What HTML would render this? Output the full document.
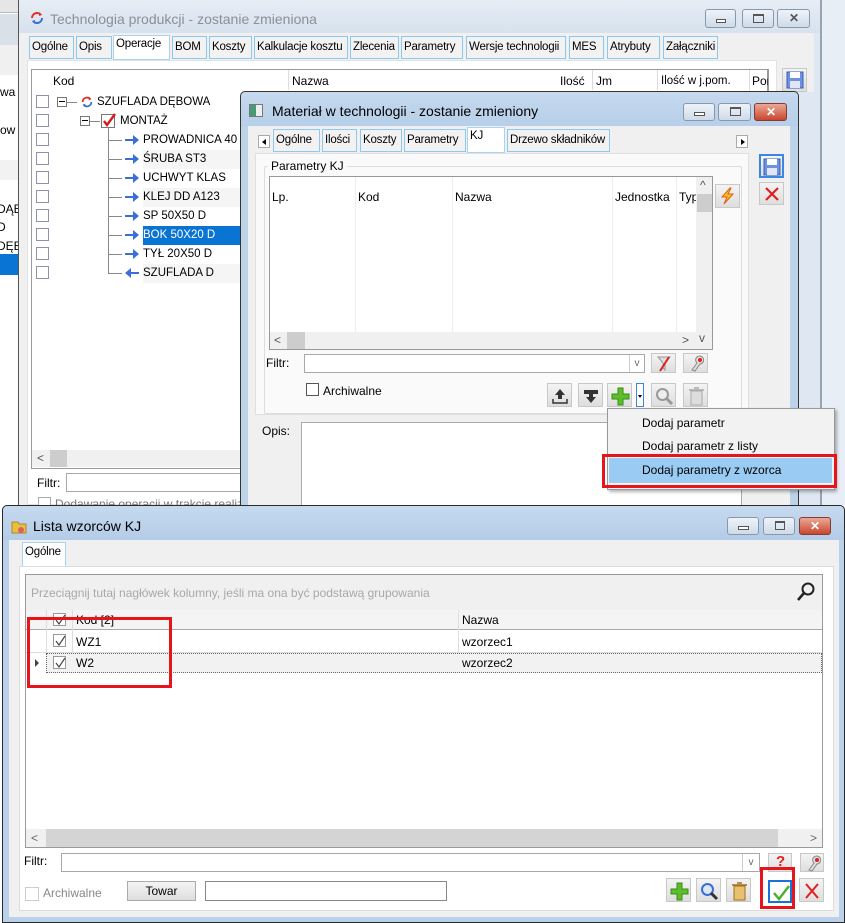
<!DOCTYPE html>
<html><head><meta charset="utf-8">
<style>
*{box-sizing:border-box;margin:0;padding:0}
body{width:845px;height:923px;position:relative;overflow:hidden;background:#fff;font-family:"Liberation Sans",sans-serif;font-size:12px;color:#000}
.a{position:absolute}
.t{position:absolute;white-space:nowrap;line-height:14px}
.tab{position:absolute;border:1px solid #8cc8f0;background:#f2f2f2;padding:4px 2px 0 2px;font-size:11.5px;letter-spacing:-0.2px;white-space:nowrap;overflow:hidden}
.tab.on{background:#fff;border-color:#a9d3f2;padding-top:2px}
.wb{position:absolute;border:1px solid #8898ab;border-radius:3px;background:linear-gradient(#eef3f9,#cfdbe9);}
.wb.cl{background:linear-gradient(#eba898,#c8462e);border-color:#8a3a2c}
.btn{position:absolute;border:1px solid #c8c8c8;background:linear-gradient(#f4f4f4,#dedede)}
.cb{position:absolute;width:13px;height:13px;border:1px solid #8f8fb0;background:#fff}
.inp{position:absolute;border:1px solid #a8a8a8;background:#fff}
</style></head><body>

<div class="a" style="left:0;top:0;width:18px;height:13px;background:#e6e6e6;border-bottom:1px solid #b8b8b8"></div>
<div class="a" style="left:0;top:14px;width:18px;height:31px;background:#d9e0e8"></div>
<div class="a" style="left:0;top:45px;width:18px;height:30px;background:#f0f0f0"></div>
<div class="a" style="left:0;top:160px;width:18px;height:20px;background:#f2f2f2"></div>
<div class="t" style="left:0;top:85px">wa</div>
<div class="t" style="left:0;top:123px">ow</div>
<div class="t" style="left:-3px;top:202px">DĄB</div>
<div class="t" style="left:-3px;top:220px">D</div>
<div class="t" style="left:-3px;top:239px">DĘB</div>
<div class="a" style="left:0;top:254px;width:18px;height:21px;background:#0a74d4"></div>
<div class="a" style="left:0;top:275px;width:18px;height:230px;background:#fff"></div>

<div class="a" style="left:820px;top:0;width:25px;height:505px;background:#e8eef5;border-left:2px solid #9aa4b0"></div>

<!-- WINDOW 1 -->
<div class="a" style="left:18px;top:0;width:802px;height:505px;background:#dfe8f2;border-left:1px solid #555"></div>
<div class="a" style="left:19px;top:0;width:801px;height:33px;background:linear-gradient(#e6edf5,#d7e2ee)"></div>
<svg class="a" style="left:29px;top:10px" width="16" height="16" viewBox="0 0 16 16"><path d="M3 8a5 5 0 0 1 9-3" stroke="#e03030" stroke-width="2" fill="none"/><path d="M13 8a5 5 0 0 1-9 3" stroke="#3a6ed8" stroke-width="2" fill="none"/><path d="M10 2l3 3-3 1z" fill="#e03030"/><path d="M6 14l-3-3 3-1z" fill="#3a6ed8"/></svg>
<div class="t" style="left:50px;top:12px;font-size:14px;color:#8a8f96">Technologia produkcji - zostanie zmieniona</div>
<div class="wb" style="left:705px;top:9px;width:31px;height:19px"><div class="a" style="left:10px;top:9px;width:10px;height:4px;border:1px solid #555;background:#fff"></div></div>
<div class="wb" style="left:742px;top:9px;width:32px;height:19px"><div class="a" style="left:10px;top:4px;width:11px;height:9px;border:1px solid #555;border-top-width:2px"></div></div>
<div class="wb" style="left:777px;top:9px;width:33px;height:19px"><div class="t" style="left:11px;top:1px;font-weight:bold;color:#555">✕</div></div>
<div class="a" style="left:19px;top:33px;width:795px;height:472px;background:#f0f0f0"></div>
<div class="tab" style="left:29px;top:36px;width:45px;height:23px">Ogólne</div>
<div class="tab" style="left:76px;top:36px;width:36px;height:23px">Opis</div>
<div class="tab on" style="left:113px;top:35px;width:57px;height:25px">Operacje</div>
<div class="tab" style="left:172px;top:36px;width:35px;height:23px">BOM</div>
<div class="tab" style="left:209px;top:36px;width:43px;height:23px">Koszty</div>
<div class="tab" style="left:254px;top:36px;width:94px;height:23px">Kalkulacje kosztu</div>
<div class="tab" style="left:350px;top:36px;width:49px;height:23px">Zlecenia</div>
<div class="tab" style="left:401px;top:36px;width:62px;height:23px">Parametry</div>
<div class="tab" style="left:466px;top:36px;width:100px;height:23px">Wersje technologii</div>
<div class="tab" style="left:569px;top:36px;width:35px;height:23px">MES</div>
<div class="tab" style="left:607px;top:36px;width:53px;height:23px">Atrybuty</div>
<div class="tab" style="left:663px;top:36px;width:55px;height:23px">Załączniki</div>
<div class="a" style="left:27px;top:60px;width:750px;height:445px;background:#fff;border:1px solid #e2e2e2"></div>
<div class="a" style="left:31px;top:69px;width:738px;height:400px;border:1px solid #9a9a9a;border-right-width:2px;background:#fff"></div>
<div class="t" style="left:53px;top:74px">Kod</div>
<div class="t" style="left:292px;top:74px">Nazwa</div>
<div class="a" style="left:288px;top:70px;width:1px;height:20px;background:#ddd"></div>
<div class="t" style="left:560px;top:74px">Ilość</div>
<div class="a" style="left:592px;top:70px;width:1px;height:20px;background:#ddd"></div>
<div class="t" style="left:596px;top:74px">Jm</div>
<div class="a" style="left:657px;top:70px;width:1px;height:20px;background:#ddd"></div>
<div class="t" style="left:661px;top:74px;font-size:11.5px">Ilość w j.pom.</div>
<div class="a" style="left:749px;top:70px;width:1px;height:20px;background:#ddd"></div>
<div class="t" style="left:752px;top:74px;width:16px;overflow:hidden">Por</div>
<div class="btn" style="left:782px;top:68px;width:25px;height:24px"><svg class="a" style="left:3px;top:2px" width="18" height="18"><rect x="1" y="1" width="16" height="16" fill="#6f8fe0" stroke="#3a5cb8"/><rect x="4" y="1" width="10" height="6" fill="#fff"/><rect x="4" y="10" width="10" height="7" fill="#dfe6f7"/></svg></div>
<div class="a" style="left:143px;top:150px;width:97px;height:19px;background:#f5f5f5"></div>
<div class="a" style="left:143px;top:188px;width:97px;height:19px;background:#f5f5f5"></div>
<div class="a" style="left:143px;top:264px;width:97px;height:19px;background:#f5f5f5"></div>
<div class="a" style="left:143px;top:226px;width:97px;height:19px;background:#0a74d4"></div>
<div class="cb" style="left:36px;top:95px"></div><div class="cb" style="left:36px;top:114px"></div><div class="cb" style="left:36px;top:133px"></div><div class="cb" style="left:36px;top:152px"></div><div class="cb" style="left:36px;top:171px"></div><div class="cb" style="left:36px;top:190px"></div><div class="cb" style="left:36px;top:209px"></div><div class="cb" style="left:36px;top:228px"></div><div class="cb" style="left:36px;top:247px"></div><div class="cb" style="left:36px;top:266px"></div>
<div class="a" style="left:57px;top:97px;width:10px;height:10px;border:1px solid #777;background:#fff"><div class="a" style="left:1px;top:3px;width:6px;height:1px;background:#000"></div></div>
<div class="a" style="left:67px;top:102px;width:10px;height:1px;background:#888"></div>
<svg class="a" style="left:80px;top:95px" width="14" height="14" viewBox="0 0 16 16"><path d="M3 8a5 5 0 0 1 9-3" stroke="#e03030" stroke-width="2" fill="none"/><path d="M13 8a5 5 0 0 1-9 3" stroke="#3a6ed8" stroke-width="2" fill="none"/><path d="M10 2l3 3-3 1z" fill="#e03030"/><path d="M6 14l-3-3 3-1z" fill="#3a6ed8"/></svg>
<div class="t" style="left:97px;top:95px;font-size:11.5px">SZUFLADA DĘBOWA</div>
<div class="a" style="left:80px;top:116px;width:10px;height:10px;border:1px solid #777;background:#fff"><div class="a" style="left:1px;top:3px;width:6px;height:1px;background:#000"></div></div>
<div class="a" style="left:90px;top:121px;width:10px;height:1px;background:#888"></div>
<div class="a" style="left:101px;top:114px;width:14px;height:14px;border:1px solid #777;background:#fff"></div>
<svg class="a" style="left:101px;top:112px" width="16" height="16"><path d="M3 9l3 4 8-11" stroke="#d41c1c" stroke-width="2.4" fill="none"/></svg>
<div class="t" style="left:120px;top:114px;font-size:11.5px">MONTAŻ</div>
<div class="a" style="left:108px;top:128px;width:1px;height:145px;background:#888"></div>
<div class="a" style="left:108px;top:140px;width:14px;height:1px;background:#888"></div><div class="a" style="left:108px;top:159px;width:14px;height:1px;background:#888"></div><div class="a" style="left:108px;top:178px;width:14px;height:1px;background:#888"></div><div class="a" style="left:108px;top:197px;width:14px;height:1px;background:#888"></div><div class="a" style="left:108px;top:216px;width:14px;height:1px;background:#888"></div><div class="a" style="left:108px;top:235px;width:14px;height:1px;background:#888"></div><div class="a" style="left:108px;top:254px;width:14px;height:1px;background:#888"></div><div class="a" style="left:108px;top:273px;width:14px;height:1px;background:#888"></div>
<svg class="a" style="left:125px;top:134px" width="14" height="150"><g fill="#3a6ed8"><path d="M0 5h8v-4l6 5-6 5v-4h-8z"/><path d="M0 24h8v-4l6 5-6 5v-4h-8z"/><path d="M0 43h8v-4l6 5-6 5v-4h-8z"/><path d="M0 62h8v-4l6 5-6 5v-4h-8z"/><path d="M0 81h8v-4l6 5-6 5v-4h-8z"/><path d="M0 100h8v-4l6 5-6 5v-4h-8z"/><path d="M0 119h8v-4l6 5-6 5v-4h-8z"/><path d="M14 138h-8v-4l-6 5 6 5v-4h8z"/></g></svg>
<div class="t" style="left:143px;top:133px;font-size:11.5px">PROWADNICA 40</div>
<div class="t" style="left:143px;top:152px;font-size:11.5px">ŚRUBA ST3</div>
<div class="t" style="left:143px;top:171px;font-size:11.5px">UCHWYT KLAS</div>
<div class="t" style="left:143px;top:190px;font-size:11.5px">KLEJ DD A123</div>
<div class="t" style="left:143px;top:209px;font-size:11.5px">SP 50X50 D</div>
<div class="t" style="left:143px;top:228px;color:#fff;font-size:11.5px">BOK 50X20 D</div>
<div class="t" style="left:143px;top:247px;font-size:11.5px">TYŁ 20X50 D</div>
<div class="t" style="left:143px;top:266px;font-size:11.5px">SZUFLADA D</div>
<div class="a" style="left:32px;top:450px;width:208px;height:17px;background:#f0f0f0"></div>
<div class="a" style="left:50px;top:450px;width:17px;height:17px;background:#cdcdcd"></div>
<div class="t" style="left:37px;top:451px;color:#555">&lt;</div>
<div class="t" style="left:37px;top:476px">Filtr:</div>
<div class="inp" style="left:66px;top:473px;width:180px;height:19px"></div>
<div class="cb" style="left:38px;top:497px;border-color:#aaa"></div>
<div class="t" style="left:55px;top:497px;color:#777">Dodawanie operacji w trakcie realiza</div>

<!-- WINDOW 2 -->
<div class="a" style="left:240px;top:91px;width:559px;height:420px;background:#bcd3ea;border:1px solid #333;border-radius:5px 5px 0 0"></div>
<div class="a" style="left:241px;top:92px;width:557px;height:34px;background:linear-gradient(#c5d9ee,#b7cfe9);border-radius:5px 5px 0 0"></div>
<div class="a" style="left:799px;top:92px;width:15px;height:413px;background:#dfe8f2"></div>
<div class="a" style="left:249px;top:104px;width:14px;height:13px;border:1px solid #777;background:linear-gradient(90deg,#4a9a7a 50%,#eee 50%)"></div>
<div class="t" style="left:272px;top:104px;font-size:14px">Materiał w technologii - zostanie zmieniony</div>
<div class="wb" style="left:683px;top:103px;width:32px;height:18px"><div class="a" style="left:10px;top:8px;width:11px;height:4px;border:1px solid #555;background:#fff"></div></div>
<div class="wb" style="left:718px;top:103px;width:33px;height:18px"><div class="a" style="left:11px;top:3px;width:11px;height:9px;border:1px solid #555;border-top-width:2px"></div></div>
<div class="wb cl" style="left:754px;top:103px;width:33px;height:18px"><div class="t" style="left:11px;top:1px;font-weight:bold;color:#fff">✕</div></div>
<div class="a" style="left:248px;top:126px;width:542px;height:385px;background:#f0f0f0"></div>
<div class="a" style="left:258px;top:135px;width:12px;height:13px;border:1px solid #aaa;background:#fff"><div class="a" style="left:3px;top:3px;border-right:4px solid #000;border-top:3px solid transparent;border-bottom:3px solid transparent"></div></div>
<div class="a" style="left:736px;top:135px;width:12px;height:13px;border:1px solid #aaa;background:#fff"><div class="a" style="left:4px;top:3px;border-left:4px solid #000;border-top:3px solid transparent;border-bottom:3px solid transparent"></div></div>
<div class="tab" style="left:273px;top:129px;width:47px;height:23px">Ogólne</div>
<div class="tab" style="left:322px;top:129px;width:35px;height:23px">Ilości</div>
<div class="tab" style="left:360px;top:129px;width:42px;height:23px">Koszty</div>
<div class="tab" style="left:404px;top:129px;width:62px;height:23px">Parametry</div>
<div class="tab on" style="left:467px;top:127px;width:38px;height:26px">KJ</div>
<div class="tab" style="left:507px;top:129px;width:103px;height:23px">Drzewo składników</div>
<div class="a" style="left:255px;top:153px;width:494px;height:262px;background:#fafafa;border:1px solid #e0e0e0"></div>
<div class="a" style="left:264px;top:166px;width:478px;height:248px;border:1px solid #dcdcdc;border-radius:2px"></div>
<div class="t" style="left:268px;top:159px;background:#fafafa;padding:0 3px">Parametry KJ</div>
<div class="a" style="left:269px;top:176px;width:444px;height:174px;border:1px solid #999;background:#fff"></div>
<div class="a" style="left:355px;top:177px;width:1px;height:155px;background:#eee"></div>
<div class="a" style="left:452px;top:177px;width:1px;height:155px;background:#eee"></div>
<div class="a" style="left:612px;top:177px;width:1px;height:155px;background:#eee"></div>
<div class="a" style="left:676px;top:177px;width:1px;height:155px;background:#eee"></div>
<div class="t" style="left:272px;top:190px">Lp.</div>
<div class="t" style="left:358px;top:190px">Kod</div>
<div class="t" style="left:455px;top:190px">Nazwa</div>
<div class="t" style="left:615px;top:190px">Jednostka</div>
<div class="t" style="left:679px;top:190px;width:17px;overflow:hidden">Typ</div>
<div class="a" style="left:696px;top:177px;width:16px;height:172px;background:#f0f0f0"></div>
<div class="a" style="left:697px;top:194px;width:15px;height:18px;background:#cdcdcd"></div>
<div class="t" style="left:700px;top:178px;color:#555">^</div>
<div class="t" style="left:699px;top:331px;color:#555">v</div>
<div class="a" style="left:270px;top:332px;width:426px;height:17px;background:#f0f0f0"></div>
<div class="a" style="left:287px;top:332px;width:18px;height:17px;background:#cdcdcd"></div>
<div class="t" style="left:274px;top:333px;color:#555">&lt;</div>
<div class="t" style="left:682px;top:333px;color:#555">&gt;</div>
<div class="btn" style="left:715px;top:184px;width:25px;height:24px"><svg class="a" style="left:3px;top:2px" width="18" height="18"><path d="M11 1L3 10h5l-3 7 9-10h-5l3-6z" fill="#f5c020" stroke="#e06010"/></svg></div>
<div class="btn" style="left:759px;top:154px;width:25px;height:24px;border:2px solid #3a86e0"><svg class="a" style="left:2px;top:2px" width="18" height="18"><rect x="1" y="1" width="16" height="16" fill="#6f8fe0" stroke="#3a5cb8"/><rect x="4" y="1" width="10" height="6" fill="#fff"/><rect x="4" y="10" width="10" height="7" fill="#dfe6f7"/></svg></div>
<div class="btn" style="left:759px;top:182px;width:25px;height:23px"><svg class="a" style="left:4px;top:3px" width="16" height="16"><path d="M2 2l12 12M14 2L2 14" stroke="#e02020" stroke-width="2.2"/></svg></div>
<div class="t" style="left:266px;top:356px">Filtr:</div>
<div class="inp" style="left:304px;top:354px;width:341px;height:19px"><div class="a" style="right:0;top:0;width:15px;height:17px;border-left:1px solid #ccc;text-align:center;color:#666;font-size:10px;line-height:17px">v</div></div>
<div class="btn" style="left:651px;top:353px;width:25px;height:20px"><svg class="a" style="left:4px;top:1px" width="16" height="17"><path d="M2 2h12l-5 6v7l-2-2v-5z" fill="#ddd" stroke="#999"/><path d="M13 2L4 16" stroke="#e02020" stroke-width="2"/></svg></div>
<div class="btn" style="left:683px;top:353px;width:25px;height:20px"><svg class="a" style="left:4px;top:1px" width="16" height="17"><path d="M4 15l5-7a4 4 0 1 1 3 1l-5 7z" fill="#ddd" stroke="#888"/><circle cx="12" cy="5" r="2" fill="#e02020"/></svg></div>
<div class="cb" style="left:306px;top:383px;border-color:#555"></div>
<div class="t" style="left:323px;top:384px">Archiwalne</div>
<div class="btn" style="left:547px;top:383px;width:25px;height:24px"><svg class="a" style="left:4px;top:4px" width="16" height="16"><path d="M8 1l5 6h-3v4H6V7H3z" fill="#333"/><path d="M1 11v4h14v-4" stroke="#333" fill="none" stroke-width="1.5"/></svg></div>
<div class="btn" style="left:578px;top:383px;width:25px;height:24px"><svg class="a" style="left:4px;top:4px" width="16" height="16"><path d="M1 2h14v4H1z" fill="#333"/><path d="M8 15l5-6h-3V5H6v4H3z" fill="#333"/></svg></div>
<div class="btn" style="left:607px;top:383px;width:25px;height:24px"><svg class="a" style="left:3px;top:3px" width="19" height="19"><path d="M7 1h5v6h6v5h-6v6H7v-6H1V7h6z" fill="#5cbf2a" stroke="#3a8a1a"/></svg></div>
<div class="a" style="left:636px;top:383px;width:8px;height:24px;border:1px solid #3a86e0;background:#fff"><div class="a" style="left:1px;top:11px;border-top:3px solid #000;border-left:2px solid transparent;border-right:2px solid transparent"></div></div>
<div class="btn" style="left:651px;top:383px;width:25px;height:24px"><svg class="a" style="left:3px;top:3px" width="19" height="19"><circle cx="7.5" cy="7.5" r="5.5" fill="#eee" stroke="#999" stroke-width="2"/><path d="M11 11l6 6" stroke="#999" stroke-width="3"/></svg></div>
<div class="btn" style="left:683px;top:383px;width:25px;height:24px"><svg class="a" style="left:5px;top:3px" width="16" height="19"><rect x="2" y="4" width="11" height="14" fill="#ddd" stroke="#aaa"/><path d="M0 3h15M5 1h5" stroke="#aaa" stroke-width="1.5"/></svg></div>
<div class="t" style="left:262px;top:424px">Opis:</div>
<div class="inp" style="left:301px;top:422px;width:441px;height:95px;border-color:#aaa"></div>
<div class="a" style="left:607px;top:408px;width:228px;height:82px;background:#f2f2f2;border:1px solid #999;box-shadow:2px 2px 3px rgba(0,0,0,.3)"></div>
<div class="t" style="left:642px;top:416px">Dodaj parametr</div>
<div class="t" style="left:642px;top:439px">Dodaj parametr z listy</div>
<div class="a" style="left:609px;top:458px;width:223px;height:25px;background:#99cbf3"></div>
<div class="t" style="left:642px;top:463px">Dodaj parametry z wzorca</div>
<div class="a" style="left:602px;top:454px;width:235px;height:34px;border:3px solid #e8141c"></div>

<!-- WINDOW 3 -->
<div class="a" style="left:2px;top:505px;width:843px;height:418px;background:#b9d1ea;border:1px solid #2a2a2a;border-radius:5px 5px 0 0"></div>
<div class="a" style="left:3px;top:506px;width:841px;height:34px;background:linear-gradient(#c6daef,#b3cce7);border-radius:5px 5px 0 0"></div>
<svg class="a" style="left:11px;top:518px" width="16" height="16"><path d="M1 4h6l1 2h7v9H1z" fill="#e8c040" stroke="#b08820"/><circle cx="10" cy="12" r="3" fill="#e06060"/></svg>
<div class="t" style="left:33px;top:519px;font-size:14px">Lista wzorców KJ</div>
<div class="wb" style="left:727px;top:517px;width:32px;height:18px"><div class="a" style="left:10px;top:8px;width:11px;height:4px;border:1px solid #555;background:#fff"></div></div>
<div class="wb" style="left:763px;top:517px;width:32px;height:18px"><div class="a" style="left:11px;top:3px;width:10px;height:9px;border:1px solid #555;border-top-width:2px"></div></div>
<div class="wb cl" style="left:799px;top:517px;width:32px;height:18px"><div class="t" style="left:10px;top:1px;font-weight:bold;color:#fff">✕</div></div>
<div class="a" style="left:9px;top:540px;width:830px;height:377px;background:#f0f0f0"></div>
<div class="tab on" style="left:22px;top:542px;width:44px;height:25px;padding-top:3px">Ogólne</div>
<div class="a" style="left:19px;top:566px;width:815px;height:345px;background:#fff;border:1px solid #dcdcdc"></div>
<div class="a" style="left:25px;top:574px;width:798px;height:274px;border:1px solid #999;background:#fff"></div>
<div class="a" style="left:26px;top:575px;width:796px;height:35px;background:#f0f0f0"></div>
<div class="t" style="left:31px;top:586px;color:#a8a8a8">Przeciągnij tutaj nagłówek kolumny, jeśli ma ona być podstawą grupowania</div>
<svg class="a" style="left:796px;top:582px" width="20" height="20"><circle cx="12" cy="7" r="5.5" fill="none" stroke="#222" stroke-width="2"/><path d="M8 11l-6 7" stroke="#222" stroke-width="2.5"/></svg>
<div class="a" style="left:26px;top:610px;width:796px;height:20px;background:#f4f4f4;border-bottom:1px solid #aaa"></div>
<div class="a" style="left:46px;top:610px;width:1px;height:63px;background:#ddd"></div>
<div class="a" style="left:72px;top:610px;width:1px;height:63px;background:#ddd"></div>
<div class="a" style="left:458px;top:610px;width:1px;height:63px;background:#ddd"></div>
<div class="cb" style="left:53px;top:613px;border-color:#999"></div>
<div class="t" style="left:76px;top:613px">Kod [2]</div>
<div class="t" style="left:462px;top:613px">Nazwa</div>
<div class="a" style="left:26px;top:652px;width:796px;height:1px;background:#ddd"></div>
<div class="a" style="left:46px;top:653px;width:776px;height:20px;background:#f2f2f2;border:1px dotted #666"></div>
<div class="cb" style="left:53px;top:634px;border-color:#999"></div>
<svg class="a" style="left:54px;top:635px" width="12" height="12"><path d="M2 6l3 4 6-9" stroke="#444" fill="none" stroke-width="1.2"/></svg>
<svg class="a" style="left:54px;top:614px" width="12" height="12"><path d="M2 6l3 4 6-9" stroke="#444" fill="none" stroke-width="1.2"/></svg>
<div class="cb" style="left:53px;top:656px;border-color:#999"></div>
<svg class="a" style="left:54px;top:657px" width="12" height="12"><path d="M2 6l3 4 6-9" stroke="#444" fill="none" stroke-width="1.2"/></svg>
<div class="a" style="left:35px;top:659px;border-left:4px solid #444;border-top:4px solid transparent;border-bottom:4px solid transparent"></div>
<div class="t" style="left:76px;top:635px">WZ1</div>
<div class="t" style="left:462px;top:635px">wzorzec1</div>
<div class="t" style="left:76px;top:656px">W2</div>
<div class="t" style="left:462px;top:656px">wzorzec2</div>
<div class="a" style="left:27px;top:617px;width:145px;height:71px;border:3px solid #e8141c"></div>
<div class="a" style="left:26px;top:829px;width:796px;height:18px;background:#f0f0f0"></div>
<div class="a" style="left:46px;top:829px;width:732px;height:18px;background:#d4d4d4"></div>
<div class="t" style="left:31px;top:831px;color:#666">&lt;</div>
<div class="t" style="left:810px;top:831px;color:#666">&gt;</div>
<div class="t" style="left:24px;top:854px">Filtr:</div>
<div class="inp" style="left:61px;top:853px;width:699px;height:19px"><div class="a" style="right:0;top:0;width:17px;height:17px;border-left:1px solid #ccc;text-align:center;color:#666;font-size:10px;line-height:17px">v</div></div>
<div class="btn" style="left:768px;top:853px;width:24px;height:19px"><div class="t" style="left:7px;top:1px;color:#e02020;font-weight:bold;font-size:15px">?</div></div>
<div class="btn" style="left:800px;top:853px;width:24px;height:19px"><svg class="a" style="left:4px;top:1px" width="16" height="17"><path d="M4 15l5-7a4 4 0 1 1 3 1l-5 7z" fill="#ddd" stroke="#888"/><circle cx="12" cy="5" r="2" fill="#e02020"/></svg></div>
<div class="cb" style="left:25px;top:887px;width:14px;height:14px;border-color:#ccc"></div>
<div class="t" style="left:43px;top:886px;color:#888">Archiwalne</div>
<div class="btn" style="left:127px;top:881px;width:69px;height:20px;border-color:#aaa;text-align:center;line-height:18px">Towar</div>
<div class="inp" style="left:205px;top:881px;width:242px;height:20px;border-color:#888"></div>
<div class="btn" style="left:666px;top:878px;width:25px;height:24px"><svg class="a" style="left:3px;top:3px" width="19" height="19"><path d="M7 1h5v6h6v5h-6v6H7v-6H1V7h6z" fill="#5cbf2a" stroke="#3a8a1a"/></svg></div>
<div class="btn" style="left:696px;top:878px;width:25px;height:24px"><svg class="a" style="left:3px;top:3px" width="19" height="19"><circle cx="7.5" cy="7.5" r="5.5" fill="#dbe8f7" stroke="#3a6ed8" stroke-width="2"/><path d="M11 11l6 6" stroke="#333" stroke-width="3"/></svg></div>
<div class="btn" style="left:726px;top:878px;width:25px;height:24px"><svg class="a" style="left:5px;top:3px" width="16" height="19"><rect x="2" y="4" width="11" height="14" fill="#e8c070" stroke="#a07020"/><path d="M0 3h15M5 1h5" stroke="#a07020" stroke-width="1.5"/></svg></div>
<div class="btn" style="left:768px;top:880px;width:24px;height:23px;border:2px solid #1a6fd8;background:#fff"><svg class="a" style="left:2px;top:2px" width="18" height="18"><path d="M2 9l5 6 10-13" stroke="#4cb02a" stroke-width="2.5" fill="none"/></svg></div>
<div class="btn" style="left:799px;top:878px;width:25px;height:24px"><svg class="a" style="left:4px;top:3px" width="16" height="18"><path d="M2 2l12 14M14 2L2 16" stroke="#e02020" stroke-width="2"/></svg></div>
<div class="a" style="left:760px;top:867px;width:35px;height:42px;border:3px solid #e8141c"></div>
</body></html>
